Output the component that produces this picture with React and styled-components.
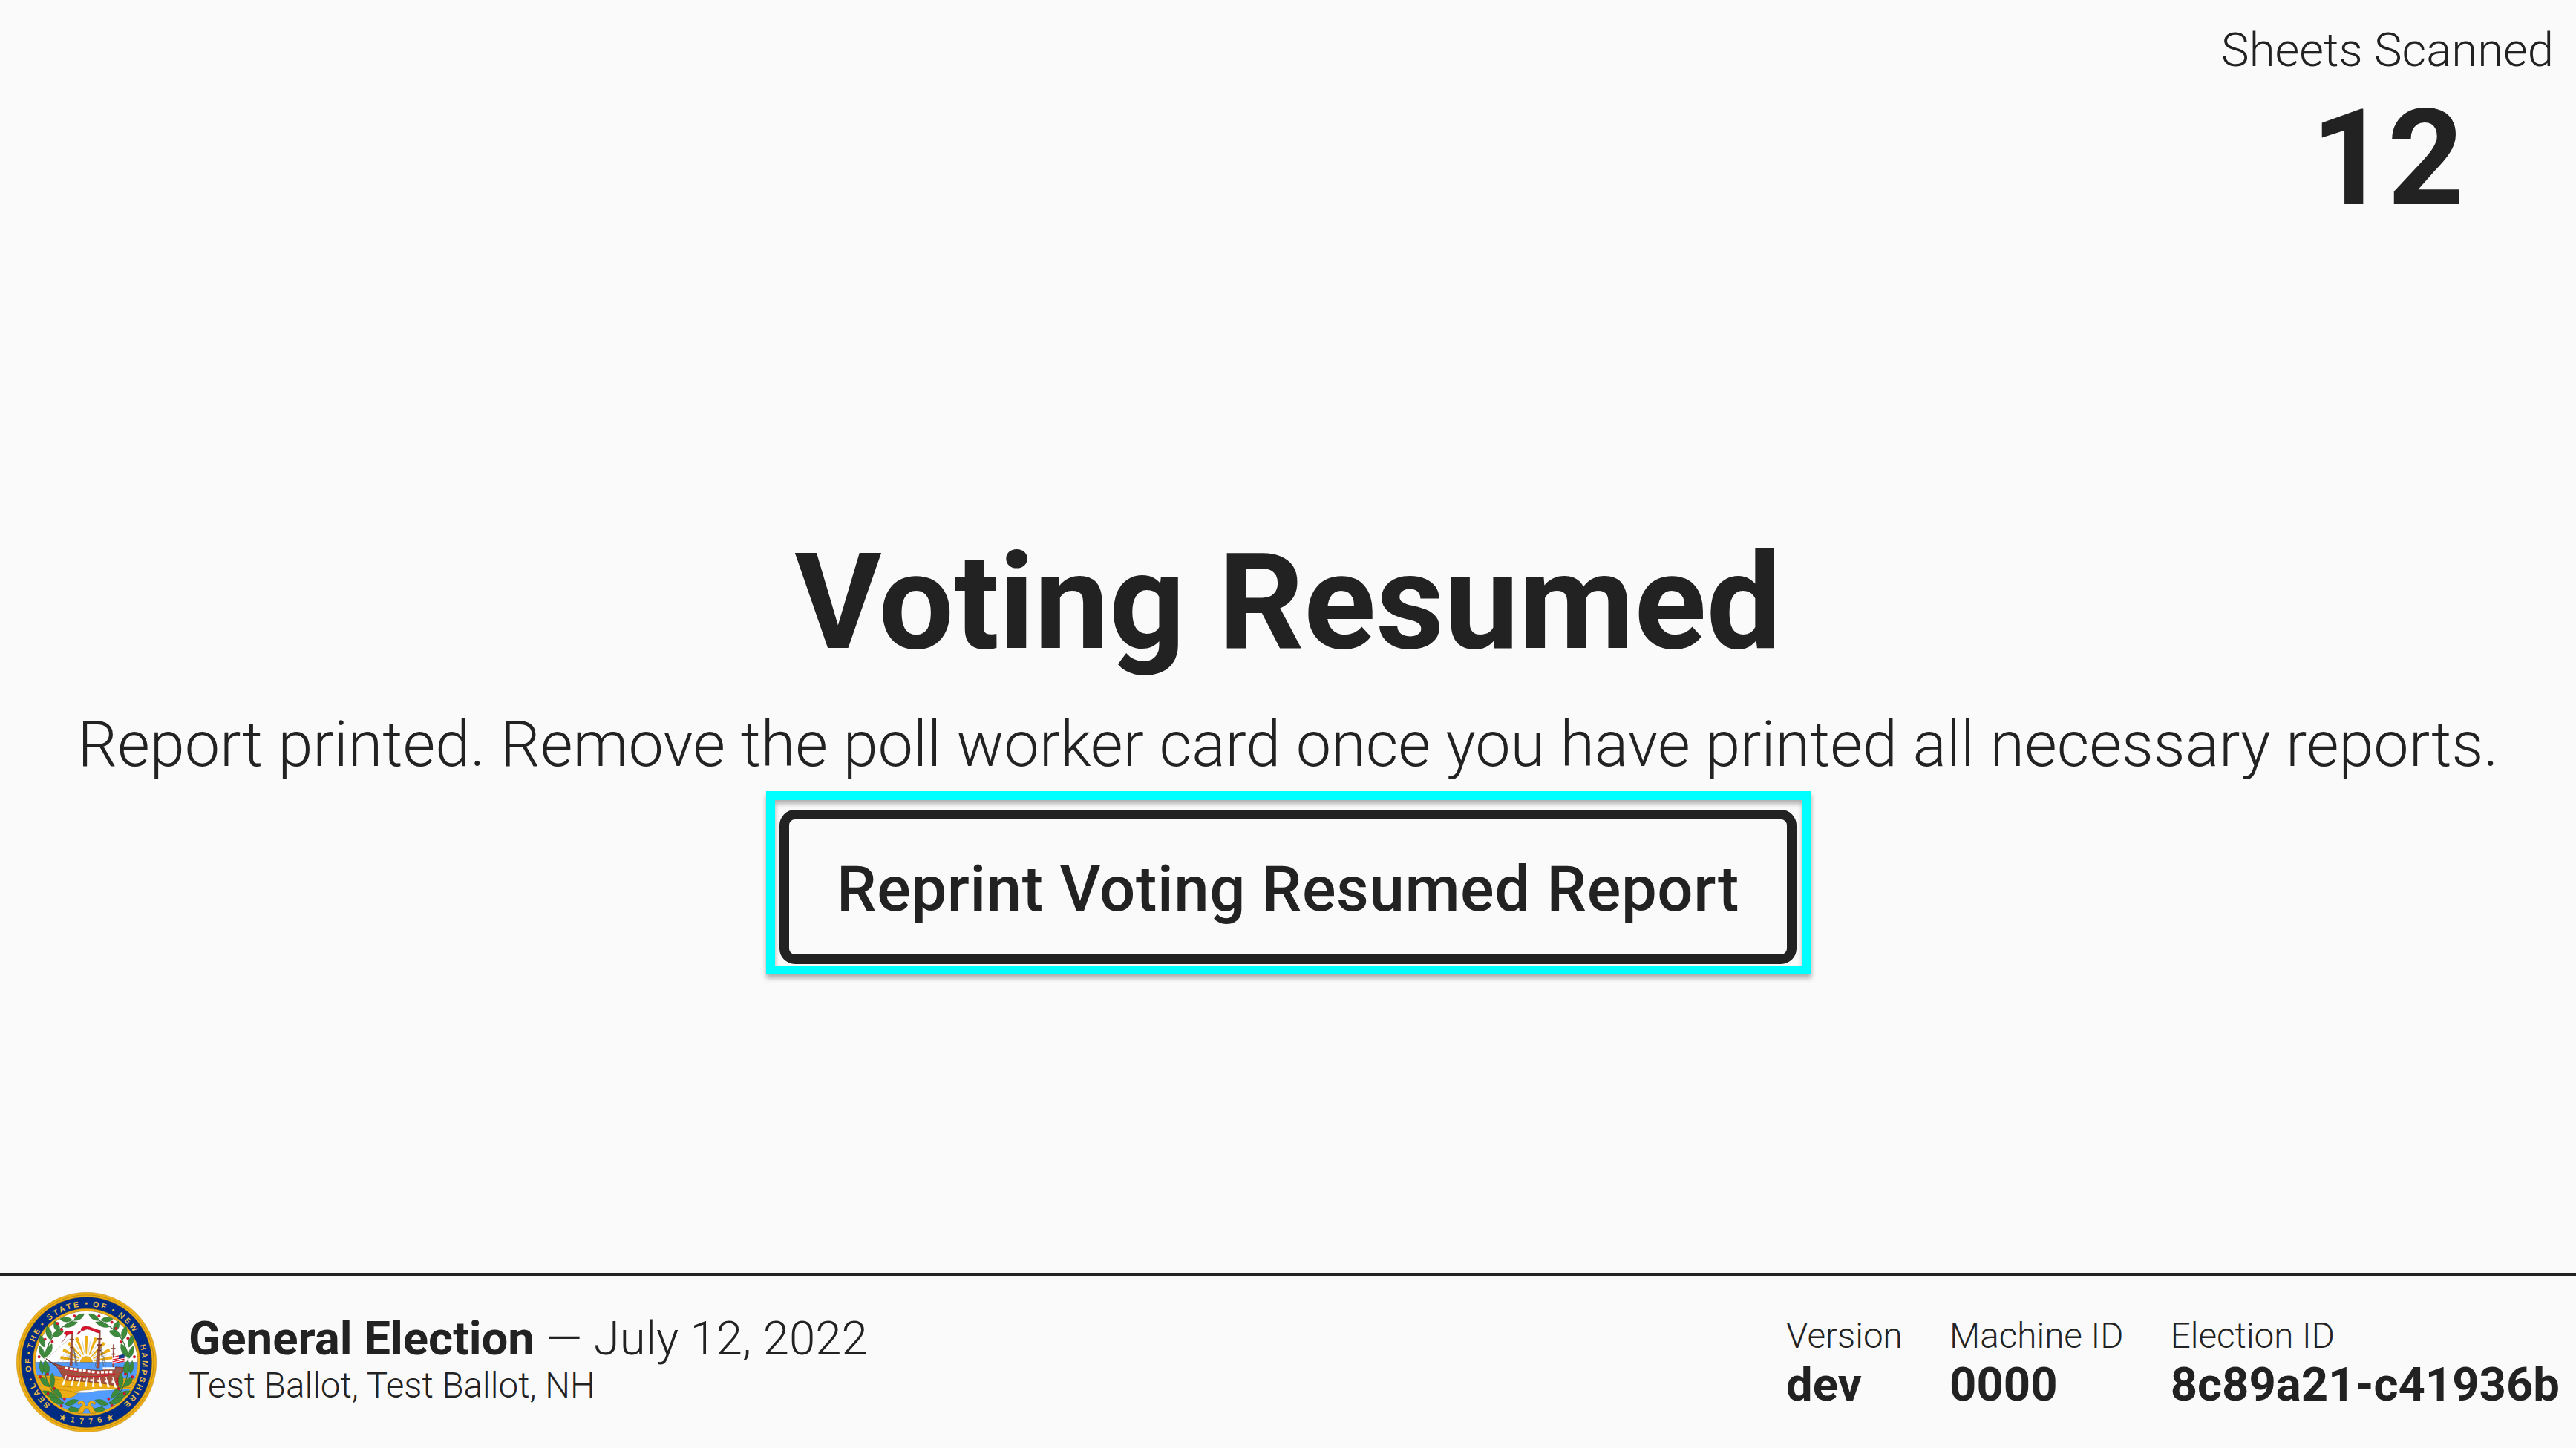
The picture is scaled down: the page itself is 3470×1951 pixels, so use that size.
import React from 'react';
import styled, { createGlobalStyle } from 'styled-components';

const GlobalStyle = createGlobalStyle`
  * {
    box-sizing: border-box;
  }

  html,
  body {
    margin: 0;
    background: #FAFAFA;
  }

  body {
    font-family: Roboto, sans-serif;
    font-weight: 300;
    color: #222;
  }
`;

const Screen = styled.div`
  display: flex;
  flex-direction: column;
  width: 100%;
  height: 100vh;
  overflow: hidden;
  background: #FAFAFA;
`;

const Main = styled.main`
  flex: 1;
  display: grid;
  grid-template: 1fr / 1fr;

  > * {
    grid-area: 1 / 1;
  }
`;

const SheetCount = styled.div`
  justify-self: end;
  align-self: start;
  display: flex;
  flex-direction: column;
  align-items: center;
  padding: 29px 30px 0 0;
`;

const SheetCountLabel = styled.div`
  font-size: 63.4px;
  line-height: 76px;
`;

const SheetCountValue = styled.div`
  margin-top: 18.5px;
  font-size: 179.6px;
  font-weight: 700;
  line-height: 180px;
`;

const Message = styled.section`
  display: flex;
  flex-direction: column;
  align-items: center;
  padding-top: 711.5px;
  white-space: nowrap;
`;

const Title = styled.h1`
  margin: 0 0 42.5px;
  font-size: 179.6px;
  font-weight: 700;
  line-height: 200px;
`;

const Text = styled.p`
  margin: 0 0 37.3px;
  font-size: 84.55px;
  line-height: 100px;
`;

const Highlight = styled.div`
  position: relative;

  &::after {
    content: '';
    position: absolute;
    top: -25.3px;
    right: -20px;
    bottom: -13.7px;
    left: -18px;
    border: 12px solid #00FFFF;
    filter: drop-shadow(0 5px 3px rgba(0, 0, 0, 0.3));
    pointer-events: none;
  }
`;

const Button = styled.button`
  display: block;
  width: 1370px;
  height: 208px;
  padding: 5px 0 0;
  border: 13px solid #222;
  border-radius: 21px;
  background: #FAFAFA;
  font-family: inherit;
  font-size: 85.1px;
  font-weight: 500;
  letter-spacing: 0.6px;
  line-height: 100px;
  color: #222;
  cursor: pointer;
`;

const Footer = styled.footer`
  display: flex;
  align-items: flex-start;
  height: 236px;
  padding: 0 22px;
  border-top: 4px solid #222;
`;

const SealBox = styled.div`
  width: 189px;
  height: 189px;
  margin: 21.5px 43px 0 0;

  svg {
    display: block;
  }
`;

const ElectionInfo = styled.div`
  flex: 1;
  padding-top: 48.5px;
`;

const ElectionTitle = styled.div`
  font-size: 63.5px;
  line-height: 72px;

  strong {
    font-weight: 700;
  }
`;

const ElectionPlace = styled.div`
  font-size: 47.6px;
  line-height: 54px;
`;

const MachineInfo = styled.div`
  display: flex;
  gap: 63.3px;
  padding-top: 53.7px;
`;

const InfoLabel = styled.div`
  font-size: 47.6px;
  line-height: 54px;
`;

const InfoValue = styled.div`
  font-size: 63.4px;
  font-weight: 700;
  line-height: 76px;
`;

const GOLD = '#EDAD14';
const NAVY = '#002B82';
const GREEN = '#3E8A3C';
const RED = '#D8142C';
const HULL = '#A3503F';

// leaf: base x, base y, tip x, tip y, width
const LEAVES = [
  [298, 236, 341, 209, 18],
  [292, 234, 242, 230, 20],
  [257, 262, 313, 242, 18],
  [238, 282, 220, 238, 22],
  [210, 299, 258, 278, 22],
  [204, 314, 190, 258, 22],
  [178, 344, 163, 296, 20],
  [184, 384, 210, 330, 22],
  [178, 390, 160, 338, 18],
  [190, 458, 184, 398, 26],
  [172, 452, 164, 398, 16],
  [200, 505, 162, 465, 22],
  [211, 512, 211, 448, 20],
  [228, 547, 172, 521, 20],
  [250, 552, 214, 504, 20],
  [256, 574, 200, 547, 22],
  [262, 576, 316, 558, 20],
  [272, 594, 322, 600, 20],
];

const BERRIES = [
  [301, 218], [232, 248], [249, 272], [182, 312], [211, 322], [158, 383],
  [192, 453], [163, 464], [218, 511], [194, 532], [260, 553], [248, 581],
  [400, 218], [452, 243], [469, 268], [517, 308], [489, 323], [543, 383],
  [507, 453], [535, 464], [480, 512], [503, 532], [439, 553], [452, 580],
];

// word, centre angle clockwise from the top
const RING_WORDS = [
  ['SEAL', -125.6],
  ['·', -107],
  ['OF', -92.9],
  ['·', -80.6],
  ['THE', -65.7],
  ['·', -49],
  ['STATE', -24.6],
  ['·', 0],
  ['OF', 12.9],
  ['·', 27.3],
  ['NEW', 45.7],
  ['HAMPSHIRE', 105.2],
];

const OARS = [
  [268, 458, 254, 496], [300, 464, 288, 498], [325, 467, 316, 500],
  [352, 468, 345, 503], [378, 467, 376, 504], [402, 466, 407, 503],
  [428, 464, 438, 505], [455, 464, 467, 506],
];

const leafPath = ([x1, y1, x2, y2, w]) => {
  const len = Math.hypot(x2 - x1, y2 - y1);
  const nx = (-(y2 - y1) / len) * w * 0.68;
  const ny = ((x2 - x1) / len) * w * 0.68;
  const ax = x1 + (x2 - x1) * 0.3;
  const ay = y1 + (y2 - y1) * 0.3;
  const bx = x1 + (x2 - x1) * 0.68;
  const by = y1 + (y2 - y1) * 0.68;
  return `M${x1} ${y1}C${ax + nx} ${ay + ny} ${bx + nx} ${by + ny} ${x2} ${y2}C${bx - nx} ${by - ny} ${ax - nx} ${ay - ny} ${x1} ${y1}Z`;
};

const starPoints = (cx, cy, r, turn) =>
  Array.from({ length: 10 }, (_, i) => {
    const a = ((i * 36 + turn) * Math.PI) / 180;
    const d = i % 2 ? r * 0.4 : r;
    return `${cx + d * Math.sin(a)},${cy - d * Math.cos(a)}`;
  }).join(' ');

function Branch() {
  return (
    <g>
      <path
        d="M298 236C240 262 205 300 190 350C176 400 176 450 196 494C214 534 245 566 285 584C300 592 310 594 322 592"
        fill="none"
        stroke="#33702F"
        strokeWidth="3.5"
      />
      {LEAVES.map((leaf) => (
        <path key={leaf.join()} d={leafPath(leaf)} fill={GREEN} stroke="#245C2A" strokeWidth="1" />
      ))}
    </g>
  );
}

function Sun() {
  const rays = [-80, -62, -43, -22, 0, 22, 43, 62, 80];
  return (
    <g>
      {rays.map((a) => (
        <path key={a} d="M347 373L342.500 299Q349 296 355.500 299L351 373Z" fill={GOLD} transform={`rotate(${a} 349 404)`} />
      ))}
      {[-71, -52, -32, -11, 11, 32, 52, 71].map((a) => (
        <path key={a} d="M349 372V318" stroke="#77736A" strokeWidth="1" transform={`rotate(${a} 349 404)`} />
      ))}
      <path d="M324 406A25 25 0 0 1 374 406Z" fill={GOLD} stroke="#9C7414" strokeWidth="1" />
    </g>
  );
}

function Ship() {
  return (
    <g>
      <path d="M186 392L289 303M228 412L289 338M242 415L289 360" stroke="#777" strokeWidth="1" fill="none" />
      {/* rigging */}
      <path
        d="M294 335L314 420M296 350L310 420M292 345L272 412M300 350L306 418M404 330L428 422M406 350L420 422M410 345L414 424M400 340L384 424M408 362L424 372M408 378L426 390M410 394L428 404M298 372L308 368M300 388L312 384M300 402L314 400"
        stroke="#555"
        strokeWidth="1.600"
        fill="none"
      />
      <path d="M282 420L286 345L290 280H295L293 345L292 420Z" fill={HULL} stroke="#5E2B22" strokeWidth="1" />
      <path d="M389 428L396 350L401 276H406L405 350L402 428Z" fill={HULL} stroke="#5E2B22" strokeWidth="1" />
      <path d="M455 425L457 333H461L461 425Z" fill={HULL} stroke="#5E2B22" strokeWidth="1" />
      <path d="M281 314H300M283 345H296M391 310H414M393 335H412M391 357H408M449 350H467M451 372H466" stroke="#7C382C" strokeWidth="5" />
      {/* pennants */}
      <path d="M295 281C280 276 265 279 258 287C267 293 270 296 264 307L247 328C252 316 264 317 262 308C266 298 275 290 295 292Z" fill={RED} stroke="#7A1420" strokeWidth="1" />
      <path d="M404 276C378 270 360 256 340 260C331 263 326 268 327 272C330 278 322 291 311 293C316 284 316 280 324 280C336 280 345 270 356 272C376 275 388 288 404 287Z" fill={RED} stroke="#7A1420" strokeWidth="1" />
      {/* ensign */}
      <path d="M454 383L504 371L503 402L454 412Z" fill="#FFF" />
      <path d="M455 386L480 379M455 395L503 385M455 403L503 392M455 410L503 400" stroke={RED} strokeWidth="4" />
      <path d="M480 377L504 371L503 387L480 391Z" fill="#163C86" />
      {/* hull */}
      <path
        d="M186 391C203 404 222 411 243 417C300 430 355 437 415 438L417 432L463 436L467 424L501 426C495 452 484 477 478 504L470 502C420 488 340 482 262 478C252 460 238 436 226 419C210 409 195 402 186 391Z"
        fill={HULL}
        stroke="#51251E"
        strokeWidth="1.500"
      />
      <path d="M258 458C330 466 400 464 442 457M240 428C310 445 370 450 465 452" stroke={RED} strokeWidth="3" fill="none" />
      <path d="M470 474L482 470M468 484L480 481M466 494L479 491" stroke="#C21A2B" strokeWidth="6" />
      <path d="M264 428L388 446" stroke="#FFF" strokeWidth="10" strokeDasharray="12 6" />
      <path d="M391 446L458 444" stroke="#FFF" strokeWidth="10" strokeDasharray="12 5" />
      <path d="M415 430H464" stroke="#FFF" strokeWidth="9" strokeDasharray="10 1.500" />
      <path d="M471 431L479 432V443L471 442ZM483 432H491L489 443L483 442Z" fill="#7A6A6E" />
      <path d="M278 470L460 484" stroke="#F4E7E3" strokeWidth="9" strokeDasharray="10 19" />
      <path d="M186 391L226 419" stroke="#51251E" strokeWidth="2.500" />
      {OARS.map(([x1, y1, x2, y2]) => (
        <path key={x1} d={`M${x1} ${y1}L${x2 - 3} ${y2}L${x2 + 4} ${y2}Z`} fill="#FFF" stroke="#FFF" strokeWidth="2.500" />
      ))}
    </g>
  );
}

function Seal() {
  return (
    <svg width="189" height="189" viewBox="66 121.500 567 567" role="img">
      <defs>
        <clipPath id="seal-disk">
          <circle cx="349.500" cy="405" r="206.500" />
        </clipPath>
        {/* starts and ends at the bottom, clockwise */}
        <path id="seal-ring" d="M349.500 630.500A225.500 225.500 0 0 1 349.500 179.500A225.500 225.500 0 0 1 349.500 630.500" />
        <path id="seal-year" d="M100.500 405A249 249 0 0 0 598.500 405" />
      </defs>

      <circle cx="349.500" cy="405" r="282.500" fill={GOLD} stroke="#B98A1E" strokeWidth="1.500" />
      <circle cx="349.500" cy="405" r="272" fill="none" stroke="#8A6A1C" strokeWidth="1.500" />
      <circle cx="349.500" cy="405" r="264" fill={NAVY} stroke="#6D5A2A" strokeWidth="1.500" />
      <circle cx="349.500" cy="405" r="217" fill={GOLD} stroke="#7C6420" strokeWidth="1.500" />
      <circle cx="349.500" cy="405" r="207" fill="#FFF" stroke="#6D5A2A" strokeWidth="1.500" />

      <g clipPath="url(#seal-disk)">
        <Sun />
        <rect x="140" y="405" width="420" height="210" fill="#529DFF" />
        <path d="M140 405H560" stroke="#3A5E8C" strokeWidth="1.500" />
        <path d="M140 460C180 456 215 460 250 464L500 470L560 472V513L480 514C440 516 410 514 385 518C350 524 320 524 312 531C300 548 270 553 240 550L170 560L140 500Z" fill={GOLD} stroke="#8A6A1C" strokeWidth="1" />
        <path d="M150 469C190 466 220 474 262 478M200 497C230 503 262 500 290 506M205 518C250 514 290 520 312 531M500 480L545 488M470 505L540 508" stroke="#94701A" strokeWidth="1.500" fill="none" />
        <path d="M302 528C330 514 350 520 372 515C400 509 450 514 482 513C450 520 410 517 384 522C360 530 330 528 302 528Z" fill="#FFF" stroke="#8B8B7A" strokeWidth="1" />
      </g>

      <Ship />
      <Branch />
      <g transform="translate(699 0) scale(-1 1)">
        <Branch />
      </g>

      {/* ribbon tying the branches */}
      <g fill="none" strokeLinecap="round" strokeLinejoin="round">
        <path d="M319 570C335 558 345 578 335 586C322 590 330 604 318 607M381 570C365 558 355 578 365 586C378 590 370 604 382 607M336 586H364M338 592L330 607M362 592L370 607" stroke="#86651A" strokeWidth="12" />
        <path d="M319 570C335 558 345 578 335 586C322 590 330 604 318 607M381 570C365 558 355 578 365 586C378 590 370 604 382 607M336 586H364M338 592L330 607M362 592L370 607" stroke={GOLD} strokeWidth="9.500" />
      </g>

      {BERRIES.map(([x, y]) => (
        <circle key={`${x}-${y}`} cx={x} cy={y} r="5.500" fill={RED} stroke="#8E1522" strokeWidth="0.800" />
      ))}

      <g fill="#EBBB48" fontFamily="'Liberation Sans', Arial, sans-serif" fontSize="32" fontWeight="700">
        {RING_WORDS.map(([word, angle]) => (
          <text
            key={angle}
            textAnchor="middle"
            letterSpacing={word.length > 1 ? 8.5 : 0}
            stroke="#EBBB48"
            strokeWidth={word.length > 1 ? 0 : 3}
          >
            <textPath href="#seal-ring" startOffset={`${((angle + (word.length > 1 ? 181 : 180)) / 360) * 100}%`}>
              {word}
            </textPath>
          </text>
        ))}
        <text textAnchor="middle" letterSpacing="20.500">
          <textPath href="#seal-year" startOffset="51.200%">
            1776
          </textPath>
        </text>
        <polygon points={starPoints(255, 629, 15, 20)} />
        <polygon points={starPoints(444, 629, 15, -20)} />
      </g>
    </svg>
  );
}

function App() {
  return (
    <Screen>
      <GlobalStyle />
      <Main>
        <Message>
          <Title>Voting Resumed</Title>
          <Text>
            Report printed. Remove the poll worker card once you have printed all necessary reports.
          </Text>
          <Highlight>
            <Button type="button">Reprint Voting Resumed Report</Button>
          </Highlight>
        </Message>
        <SheetCount>
          <SheetCountLabel>Sheets Scanned</SheetCountLabel>
          <SheetCountValue>12</SheetCountValue>
        </SheetCount>
      </Main>
      <Footer>
        <SealBox>
          <Seal />
        </SealBox>
        <ElectionInfo>
          <ElectionTitle>
            <strong>General Election</strong> — July 12, 2022
          </ElectionTitle>
          <ElectionPlace>Test Ballot, Test Ballot, NH</ElectionPlace>
        </ElectionInfo>
        <MachineInfo>
          <div>
            <InfoLabel>Version</InfoLabel>
            <InfoValue>dev</InfoValue>
          </div>
          <div>
            <InfoLabel>Machine ID</InfoLabel>
            <InfoValue>0000</InfoValue>
          </div>
          <div>
            <InfoLabel>Election ID</InfoLabel>
            <InfoValue>8c89a21-c41936b</InfoValue>
          </div>
        </MachineInfo>
      </Footer>
    </Screen>
  );
}

export default App;
